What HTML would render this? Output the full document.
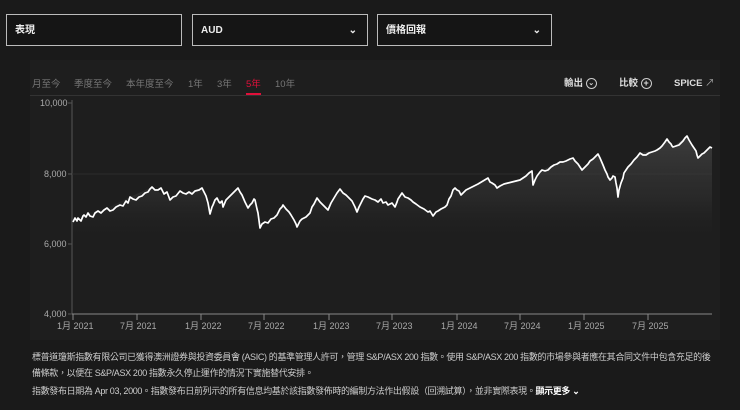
<!DOCTYPE html><html><head><meta charset="utf-8"><style>
body{margin:0;width:740px;height:410px;background:#1a1a1a;font-family:"Liberation Sans","Noto Sans CJK TC",sans-serif;color:#ddd;position:relative;overflow:hidden}
.sel{position:absolute;top:14px;height:32px;border:1.5px solid #bbb;box-sizing:border-box;background:#151515;font-size:10px;font-weight:bold;color:#eee;line-height:31px;padding-left:8px}
.chev{position:absolute;right:10px;top:0;font-size:10px}
.panel{position:absolute;left:30px;top:60px;width:690px;height:280px;background:#1e1e1e}
.tab{position:absolute;top:76px;font-size:9.5px;color:#777}
.t{position:absolute;font-size:9px;color:#aaa}
.note{position:absolute;left:32px;font-size:9px;color:#ccc;line-height:16px;width:700px;letter-spacing:-0.35px}
</style></head><body>
<div class="sel" style="left:6px;width:176px">表現</div>
<div class="sel" style="left:192px;width:176px">AUD<span class="chev">⌄</span></div>
<div class="sel" style="left:377px;width:175px">價格回報<span class="chev">⌄</span></div>
<div class="panel"></div>
<div class="tab" style="left:32px">月至今</div>
<div class="tab" style="left:74px">季度至今</div>
<div class="tab" style="left:126px">本年度至今</div>
<div class="tab" style="left:188px">1年</div>
<div class="tab" style="left:217px">3年</div>
<div class="tab" style="left:246px;color:#e0103a">5年</div>
<div class="tab" style="left:275px">10年</div>
<div style="position:absolute;left:246px;top:93px;width:15px;height:2px;background:#e0103a"></div>
<div style="position:absolute;left:30px;top:95px;width:690px;height:1px;background:#333"></div>
<div class="tab" style="left:564px;top:75px;color:#ddd;font-weight:bold">輸出 <span style="display:inline-block;width:9px;height:9px;border:1px solid #ccc;border-radius:50%;font-size:7px;line-height:9px;text-align:center;vertical-align:middle">⌄</span></div>
<div class="tab" style="left:619px;top:75px;color:#ddd;font-weight:bold">比較 <span style="display:inline-block;width:9px;height:9px;border:1px solid #ccc;border-radius:50%;font-size:9px;line-height:9px;text-align:center;vertical-align:middle">+</span></div>
<div class="tab" style="left:674px;top:75px;color:#ddd;font-weight:bold">SPICE <span style="font-weight:normal;color:#aaa">↗</span></div>
<div class="t" style="left:40px;top:98px">10,000</div>
<div class="t" style="left:44px;top:169px">8,000</div>
<div class="t" style="left:44px;top:239px">6,000</div>
<div class="t" style="left:44px;top:309px">4,000</div>
<svg style="position:absolute;left:0;top:0" width="740" height="410">
<defs><linearGradient id="g" x1="0" y1="0" x2="0" y2="1"><stop offset="0" stop-color="#444" stop-opacity=".8"/><stop offset=".35" stop-color="#333" stop-opacity=".5"/><stop offset=".6" stop-color="#1e1e1e" stop-opacity="0"/></linearGradient></defs>
<g stroke="#555" stroke-width="1"><line x1="68" y1="103" x2="72" y2="103"/><line x1="68" y1="174" x2="72" y2="174"/><line x1="68" y1="244" x2="72" y2="244"/><line x1="68" y1="314" x2="72" y2="314"/>
<line x1="72" y1="100" x2="72" y2="314"/><line x1="72" y1="174" x2="712" y2="174" stroke="#2c2c2c"/><line x1="72" y1="314" x2="712" y2="314" stroke="#888"/></g>
<g stroke="#888"><line x1="73" y1="314" x2="73" y2="320"/><line x1="137" y1="314" x2="137" y2="320"/><line x1="201" y1="314" x2="201" y2="320"/><line x1="264" y1="314" x2="264" y2="320"/><line x1="329" y1="314" x2="329" y2="320"/><line x1="392" y1="314" x2="392" y2="320"/><line x1="457" y1="314" x2="457" y2="320"/><line x1="520" y1="314" x2="520" y2="320"/><line x1="584" y1="314" x2="584" y2="320"/><line x1="648" y1="314" x2="648" y2="320"/></g>
<path fill="url(#g)" d="M73,222 L88,213 107,208 130,197 152,187 170,200 183,193 202,188 210,214 217,198 223,207 238,188 248,208 255,200 260,228 277,215 283,205 297,227 310,213 317,198 328,210 340,189 357,212 365,196 383,203 395,207 402,193 413,202 433,216 447,205 455,188 463,193 488,178 497,188 520,180 532,171 533,185 542,170 560,162 573,158 582,170 598,154 610,180 615,177 618,197 628,167 640,153 657,150 667,139 673,147 687,136 698,158 710,147 712,148 712,314 73,314Z"/>
<polyline fill="none" stroke="#fff" stroke-width="1.7" stroke-linejoin="round" points="73,222 75,218 77,221 78,218 80,220 81,221 83,216 84,215 86,217 88,213 90,216 93,217 95,213 98,211 101,213 104,210 107,208 110,211 113,210 116,207 120,205 123,206 126,201 128,203 130,197 133,199 136,200 139,197 142,196 145,193 148,192 150,189 152,187 155,190 158,190 161,188 164,194 167,192 170,200 173,197 176,196 180,191 183,193 186,194 189,192 192,194 195,191 199,190 202,188 204,192 206,196 208,203 210,214 212,207 213,205 215,200 217,198 219,202 220,203 222,201 223,207 226,200 230,196 234,192 238,188 240,192 242,195 245,202 248,208 250,205 252,203 254,199 255,200 257,209 258,213 260,228 262,224 265,222 268,223 271,219 274,218 277,215 279,211 280,209 282,207 283,205 286,209 289,212 291,215 294,220 296,224 297,227 300,221 302,219 306,217 310,213 312,207 314,204 316,200 317,198 320,202 322,204 325,207 328,210 331,203 334,198 337,193 340,189 343,193 346,195 349,198 352,201 355,207 357,212 359,207 361,203 363,199 365,196 368,197 372,199 375,200 378,202 381,199 383,203 386,202 388,205 392,203 395,207 397,202 398,199 400,196 402,193 405,197 408,198 411,200 413,202 416,204 420,207 424,209 428,212 430,211 433,216 436,212 438,211 441,209 443,208 445,207 447,205 449,199 451,196 453,190 455,188 457,190 459,191 461,195 463,193 466,190 470,188 474,186 478,184 483,181 488,178 490,182 492,183 495,185 497,188 500,186 504,184 508,183 512,182 516,181 520,180 523,178 526,176 529,173 532,171 533,185 535,180 537,176 540,172 542,170 545,171 548,170 551,167 554,165 557,164 560,162 563,162 566,161 570,159 573,158 575,161 578,164 580,167 582,170 585,167 588,164 590,161 593,159 596,156 598,154 600,158 603,165 605,170 607,174 608,177 610,180 612,178 613,176 615,177 616,183 617,188 618,197 619,190 621,183 623,178 624,173 626,170 628,167 631,164 634,160 637,157 640,153 643,155 646,155 649,153 652,152 655,151 657,150 660,148 662,146 665,142 667,139 669,142 671,144 672,146 673,147 676,146 679,145 681,143 683,141 685,138 687,136 689,140 692,145 694,148 696,151 697,155 698,158 700,156 702,154 704,153 706,151 708,149 710,147 712,148"/>
</svg>
<div class="t" style="left:57px;top:319px">1月 2021</div>
<div class="t" style="left:120px;top:319px">7月 2021</div>
<div class="t" style="left:185px;top:319px">1月 2022</div>
<div class="t" style="left:248px;top:319px">7月 2022</div>
<div class="t" style="left:313px;top:319px">1月 2023</div>
<div class="t" style="left:376px;top:319px">7月 2023</div>
<div class="t" style="left:441px;top:319px">1月 2024</div>
<div class="t" style="left:504px;top:319px">7月 2024</div>
<div class="t" style="left:568px;top:319px">1月 2025</div>
<div class="t" style="left:632px;top:319px">7月 2025</div>
<div class="note" style="top:349px">標普道瓊斯指數有限公司已獲得澳洲證券與投資委員會 (ASIC) 的基準管理人許可，管理 S&amp;P/ASX 200 指數。使用 S&amp;P/ASX 200 指數的市場參與者應在其合同文件中包含充足的後<br>備條款，以便在 S&amp;P/ASX 200 指數永久停止運作的情況下實施替代安排。</div>
<div class="note" style="top:383px">指數發布日期為 Apr 03, 2000。指數發布日前列示的所有信息均基於該指數發佈時的編制方法作出假設（回溯試算），並非實際表現。<b style="color:#fff">顯示更多 ⌄</b></div>
</body></html>
